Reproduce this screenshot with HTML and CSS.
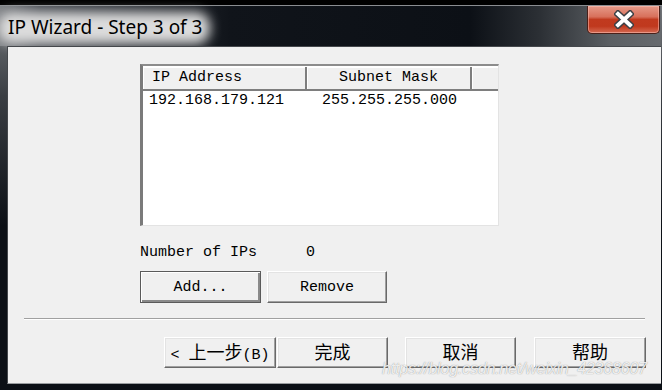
FILE: index.html
```html
<!DOCTYPE html>
<html lang="zh-CN">
<head>
    <meta charset="UTF-8">
    <meta name="viewport" content="width=device-width, initial-scale=1.0">
    <title>IP Wizard - Step 3 of 3</title>
    <link rel="stylesheet" href="styles.css">
</head>
<body>
    <div class="window">
        <div class="titlebar">
            <span class="title">IP Wizard - Step 3 of 3</span>
            <button class="close" title="Close">
                <svg width="20" height="19" viewBox="0 0 20 19">
                    <path d="M4 4 L16 15 M16 4 L4 15" stroke="#3b3f45" stroke-width="7" stroke-linecap="square"/>
                    <path d="M4 4 L16 15 M16 4 L4 15" stroke="#fff" stroke-width="4" stroke-linecap="square"/>
                </svg>
            </button>
        </div>

        <div class="client">
            <div class="listbox">
                <div class="list-head">
                    <div class="col col-ip">IP Address</div>
                    <div class="col col-mask">Subnet Mask</div>
                    <div class="col col-rest"></div>
                </div>
                <div class="list-row">
                    <div class="cell cell-ip">192.168.179.121</div>
                    <div class="cell cell-mask">255.255.255.000</div>
                </div>
            </div>

            <div class="count">
                <span class="count-label">Number of IPs</span>
                <span class="count-value">0</span>
            </div>

            <div class="list-actions">
                <button class="btn btn-default btn-add">Add...</button>
                <button class="btn btn-remove">Remove</button>
            </div>

            <div class="separator"></div>

            <div class="wizard-actions">
                <button class="btn btn-nav btn-back">&lt; <span class="cjk">上一步</span>(B)</button>
                <button class="btn btn-nav btn-finish"><span class="cjk">完成</span></button>
                <button class="btn btn-nav btn-cancel"><span class="cjk">取消</span></button>
                <button class="btn btn-nav btn-help"><span class="cjk">帮助</span></button>
            </div>

            <div class="watermark">https://blog.csdn.net/weixin_42368607</div>
        </div>
    </div>
</body>
</html>
```

FILE: styles.css
```css
* {
    margin: 0;
    padding: 0;
    box-sizing: border-box;
}

body {
    width: 662px;
    height: 390px;
    overflow: hidden;
    background: #000;
    font-family: "Liberation Mono", "Noto Sans CJK SC", monospace;
    font-size: 15px;
    color: #000;
}

.window {
    margin-top: 5px;
    height: 385px;
    border-top: 1px solid #8a8d91;
    background: linear-gradient(180deg, #74777b 0, #3a3e43 90px, #0c1016 220px);
    padding-right: 1px;
}

/* title bar */
.titlebar {
    height: 40px;
    display: flex;
    justify-content: space-between;
    align-items: flex-start;
    background: linear-gradient(90deg, #7c7f83 0, #454950 40px, #10141a 230px, #0c1016 470px, #2c3035 540px, #5b5f63 610px, #676a6e 662px);
}

.title {
    position: relative;
    z-index: 0;
    margin: 8px 0 0 8px;
    font-family: "Noto Sans", "Liberation Sans", sans-serif;
    font-size: 19px;
    line-height: 26px;
    color: #000;
}

.title::before {
    content: "";
    position: absolute;
    z-index: -1;
    left: -10px;
    right: -8px;
    top: -2px;
    bottom: -4px;
    border-radius: 14px;
    background: #dcdcdc;
    filter: blur(6px);
}

.close {
    width: 73px;
    height: 28px;
    margin-right: 1px;
    border: 1px solid #4a2019;
    border-top: none;
    border-radius: 0 0 5px 5px;
    background: linear-gradient(180deg, #e69a89 0, #d8705b 40%, #c13a1f 50%, #c0391e 75%, #d56a52 100%);
    box-shadow: inset 0 0 0 1px rgba(255, 200, 190, 0.5);
    display: flex;
    align-items: center;
    justify-content: center;
}

/* dialog body */
.client {
    position: relative;
    height: 338px;
    margin-left: 7px;
    background: #f0f0f0;
    border-top: 1px solid #45484c;
    border-left: 1px solid #45484c;
    border-bottom: 1px solid #9a9da0;
}

.listbox {
    width: 359px;
    height: 162px;
    margin: 17px 0 0 132px;
    background: #fff;
    border-style: solid;
    border-width: 2px 1px 1px 3px;
    border-color: #8c8c8c #e3e3e3 #e3e3e3 #7a7a7a;
    overflow: hidden;
}

.list-head {
    display: flex;
    height: 24px;
    margin-top: 1px;
}

.col {
    flex: none;
    height: 24px;
    line-height: 22px;
    background: #f0f0f0;
    border-right: 2px solid #7e7e7e;
    border-bottom: 2px solid #7e7e7e;
    box-shadow: inset 1px 1px #fff;
    white-space: pre;
}

.col-ip {
    width: 164px;
    padding-left: 9px;
}

.col-mask {
    width: 165px;
    text-align: center;
}

.col-rest {
    width: 40px;
}

.list-row {
    display: flex;
    height: 18px;
    line-height: 18px;
    margin-top: 1px;
}

.cell-ip {
    width: 164px;
    padding-left: 6px;
}

.cell-mask {
    padding-left: 15px;
}

.count {
    display: flex;
    margin: 18px 0 0 132px;
    height: 18px;
    line-height: 18px;
}

.count-label {
    width: 166px;
}

/* buttons */
.btn {
    font-family: "Liberation Mono", "Noto Sans CJK SC", monospace;
    font-size: 15px;
    color: #000;
    background: #f0f0f0;
    border: 1px solid;
    border-color: #fff #696969 #696969 #fff;
    box-shadow: inset -1px -1px #a0a0a0, inset 1px 1px #e3e3e3;
    text-align: center;
}

.btn-default {
    border-color: #5a5a5a;
    box-shadow: inset 1px 1px #fff, inset -2px -2px #8a8a8a;
}

.list-actions {
    display: flex;
    gap: 6px;
    margin: 9px 0 0 132px;
}

.list-actions .btn {
    height: 32px;
}

.btn-add {
    width: 121px;
}

.btn-remove {
    width: 120px;
}

.separator {
    width: 621px;
    margin: 15px 0 0 16px;
    border-top: 1px solid #a0a0a0;
    border-bottom: 1px solid #fff;
}

.wizard-actions {
    display: flex;
    margin: 17px 0 0 156px;
}

.btn-nav {
    height: 31px;
    width: 111px;
}

.cjk {
    font-family: "Noto Sans CJK SC", sans-serif;
    font-size: 18px;
    line-height: 18px;
}

.btn-back {
    width: 112px;
}

.btn-finish {
    margin-left: 1px;
}

.btn-cancel {
    margin-left: 17px;
}

.btn-help {
    margin-left: 18px;
    width: 112px;
}

.watermark {
    position: absolute;
    left: 374px;
    top: 313px;
    font-family: "Liberation Sans", Arial, sans-serif;
    font-size: 16px;
    font-style: italic;
    letter-spacing: -0.2px;
    color: rgba(255, 255, 255, 0.85);
    text-shadow: 0 0 1px rgba(90, 90, 90, 0.7);
    pointer-events: none;
    white-space: nowrap;
}
```
